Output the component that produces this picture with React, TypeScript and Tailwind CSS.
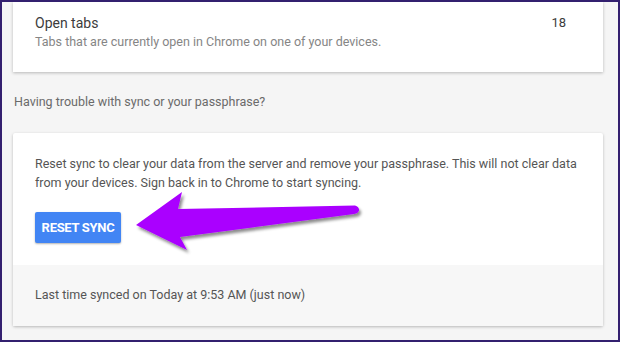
import React from "react";

export default function App() {
  return (
    <div
      className="relative w-[620px] h-[342px] overflow-hidden bg-[#f5f5f5] border-2 border-[#33206f]"
      style={{ fontFamily: "Roboto, 'Liberation Sans', sans-serif" }}
    >
      {/* top card */}
      <div className="ml-[11px] w-[590px] h-[70px] bg-white shadow-[0_1px_3px_rgba(0,0,0,0.25)] flex justify-between pl-[22px] pr-[37px] pt-[12px]">
        <div className="flex flex-col">
          <div className="text-[14px] leading-[18px] text-[#3c3c3c]">Open tabs</div>
          <div className="text-[12.5px] leading-[18px] text-[#858585] mt-[1px]">
            Tabs that are currently open in Chrome on one of your devices.
          </div>
        </div>
        <div className="text-[13px] leading-[16px] text-[#3c3c3c] pt-[1px]">18</div>
      </div>

      <div className="ml-[12px] mt-[21px] text-[12.5px] leading-[18px] text-[#6a6a6a]">
        Having trouble with sync or your passphrase?
      </div>

      {/* second card */}
      <div className="ml-[11px] mt-[22px] w-[590px] bg-white shadow-[0_1px_3px_rgba(0,0,0,0.25)] rounded-[2px]">
        <div className="pl-[22px] pr-[20px] pt-[21px] pb-[22px]">
          <div className="text-[12.5px] leading-[19px] text-[#555] w-[550px]">
            Reset sync to clear your data from the server and remove your passphrase. This will not clear data
            from your devices. Sign back in to Chrome to start syncing.
          </div>
          <button className="mt-[20px] w-[86px] h-[31px] rounded-[2px] bg-[#4285f4] text-white text-[13px] font-bold tracking-[-0.3px] shadow-[0_1px_2px_rgba(0,0,0,0.3)] flex items-center justify-center">
            RESET SYNC
          </button>
        </div>
        <div className="h-[61px] bg-[#f7f7f7] flex items-center pl-[22px] text-[12.5px] text-[#555]">
          Last time synced on Today at 9:53 AM (just now)
        </div>
      </div>

      {/* annotation arrow */}
      <svg
        className="absolute left-0 top-0 pointer-events-none"
        width="620"
        height="342"
        viewBox="0 0 620 342"
      >
        <defs>
          <filter id="sh" x="-20%" y="-40%" width="140%" height="180%">
            <feDropShadow dx="2" dy="3" stdDeviation="1.6" floodColor="#000" floodOpacity="0.45" />
          </filter>
        </defs>
        <path
          d="M134 223 L180 190 L176 207 L353 203.5 Q357.5 205 357 208.5 Q356 211.5 352 212 L178 235 L185 248 Z"
          fill="#aa00ff"
          filter="url(#sh)"
        />
      </svg>
    </div>
  );
}
